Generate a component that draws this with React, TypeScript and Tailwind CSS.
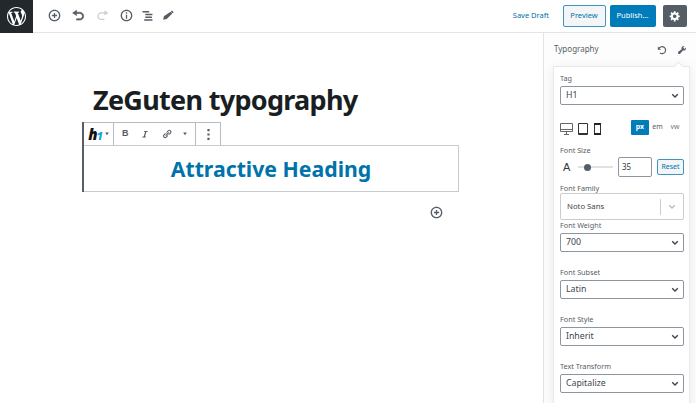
import type { ReactNode } from "react";
import clsx from "clsx";

const icons = {
  wordpress:
    "M20 10c0-5.51-4.49-10-10-10C4.48 0 0 4.49 0 10c0 5.52 4.48 10 10 10 5.51 0 10-4.48 10-10zM7.78 15.37L4.37 6.22c.55-.02 1.17-.08 1.17-.08.5-.06.44-1.13-.06-1.11 0 0-1.45.11-2.37.11-.18 0-.37 0-.58-.01C4.12 2.69 6.87 1.11 10 1.11c2.33 0 4.45.87 6.05 2.34-.68-.11-1.65.39-1.65 1.58 0 .74.45 1.36.9 2.1.35.61.55 1.36.55 2.46 0 1.49-1.4 5-1.4 5l-3.03-8.37c.54-.02.82-.17.82-.17.5-.05.44-1.25-.06-1.22 0 0-1.44.12-2.38.12-.87 0-2.33-.12-2.33-.12-.5-.03-.56 1.2-.06 1.22l.92.08 1.26 3.41zM17.41 10c.24-.64.74-1.87.43-4.25.7 1.29 1.05 2.71 1.05 4.25 0 3.29-1.73 6.24-4.4 7.78.97-2.59 1.94-5.2 2.92-7.78zM6.1 18.09C3.12 16.65 1.11 13.53 1.11 10c0-1.3.23-2.48.72-3.59C3.25 10.3 4.67 14.2 6.1 18.09zm4.03-6.63l2.58 6.98c-.86.29-1.76.45-2.71.45-.79 0-1.57-.11-2.29-.33.81-2.38 1.62-4.74 2.42-7.1z",
  insert:
    "M10 1c-5 0-9 4-9 9s4 9 9 9 9-4 9-9-4-9-9-9zm0 16c-3.9 0-7-3.1-7-7s3.1-7 7-7 7 3.1 7 7-3.1 7-7 7zm1-11H9v3H6v2h3v3h2v-3h3V9h-3V6z",
  undo: "M12 5H7V2L1 6l6 4V7h5c2.2 0 4 1.8 4 4s-1.8 4-4 4H7v2h5c3.3 0 6-2.7 6-6s-2.7-6-6-6z",
  redo: "M8 5h5V2l6 4-6 4V7H8c-2.2 0-4 1.8-4 4s1.8 4 4 4h5v2H8c-3.3 0-6-2.7-6-6s2.7-6 6-6z",
  info: "M10 1c-5 0-9 4-9 9s4 9 9 9 9-4 9-9-4-9-9-9zm0 16c-3.9 0-7-3.1-7-7s3.1-7 7-7 7 3.1 7 7-3.1 7-7 7zM9 9h2v6H9V9zm0-4h2v2.2H9V5z",
  outline: "M1 2h12v2.4H1V2zm5 5h13v2.4H6V7zm0 5h12v2.4H6V12zm-2 5h15v2.4H4V17z",
  edit: "M13.2 4.1l2.7 2.7-8.6 8.7-5.5 1.2 1.1-5.6zM14 3.300c.9-.9 1.700-.8 2.300-.2l1 1c.6.6.6 1.400-.2 2.100l-.4.5-3.100-3z",
  gear: "M18 12h-2.18c-.17.7-.44 1.35-.81 1.93l1.54 1.54-2.1 2.1-1.54-1.54c-.58.36-1.23.63-1.91.79V19H8v-2.18c-.68-.16-1.33-.43-1.91-.79l-1.54 1.54-2.12-2.12 1.54-1.54c-.36-.58-.63-1.23-.79-1.91H1V9.03h2.17c.16-.7.44-1.35.8-1.94L2.43 5.55l2.1-2.1 1.54 1.54c.58-.37 1.24-.64 1.93-.81V2h3v2.18c.68.16 1.33.43 1.91.79l1.54-1.54 2.12 2.12-1.54 1.54c.36.59.64 1.24.8 1.94H18V12zm-8.5 1.5c1.66 0 3-1.34 3-3s-1.34-3-3-3-3 1.34-3 3 1.34 3 3 3z",
  wrench:
    "M16.68 9.77c-1.34 1.34-3.3 1.67-4.95.99l-5.41 6.52c-.99.99-2.59.99-3.58 0s-.99-2.59 0-3.57l6.52-5.42c-.68-1.65-.35-3.61.99-4.95 1.28-1.28 3.12-1.62 4.72-1.06l-2.89 2.89 2.82 2.82 2.86-2.87c.53 1.58.18 3.39-1.08 4.65z",
  link: "M17.74 2.76c1.68 1.69 1.68 4.41 0 6.1l-1.53 1.52c-1.12 1.12-2.7 1.47-4.14 1.09l2.62-2.61.76-.77.76-.76c.84-.84.84-2.2 0-3.04-.84-.85-2.2-.85-3.04 0l-.77.76-3.38 3.38c-.37-1.44-.02-3.02 1.1-4.14l1.52-1.53c1.69-1.68 4.42-1.68 6.1 0zM8.59 13.43l5.34-5.34c.42-.42.42-1.1 0-1.52-.44-.43-1.13-.39-1.53 0l-5.33 5.34c-.42.42-.42 1.1 0 1.52.44.43 1.13.39 1.52 0zm-.76 2.29l4.14-4.15c.38 1.44.03 3.02-1.09 4.14l-1.52 1.53c-1.69 1.68-4.41 1.68-6.1 0-1.68-1.68-1.68-4.42 0-6.1l1.53-1.52c1.12-1.12 2.7-1.47 4.14-1.1l-4.14 4.15c-.85.84-.85 2.2 0 3.05.84.84 2.2.84 3.04 0z",
  italic: "M14.78 6h-2.13l-2.8 9h2.12l-.62 2H4.6l.62-2h2.14l2.8-9H8.03l.62-2h6.75z",
  caret: "M1 3l9 13 9-13z",
  more: "M8 0h4v4H8V0zm0 8h4v4H8V8zm0 8h4v4H8v-4z",
};

function Icon({ name, className }: { name: keyof typeof icons; className?: string }) {
  return (
    <svg viewBox="0 0 20 20" fill="currentColor" className={clsx("shrink-0", className)}>
      <path d={icons[name]} />
    </svg>
  );
}

function Chevron({ className }: { className?: string }) {
  return (
    <svg viewBox="0 0 8 6" fill="none" stroke="currentColor" strokeWidth="1.4" className={clsx("h-1.5 w-2 shrink-0", className)}>
      <path d="M1.2 1.3l2.8 2.8 2.8-2.8" />
    </svg>
  );
}

function Label({ children }: { children: ReactNode }) {
  return <p className="h-3 text-[7.25px] leading-3 text-[#555d66]">{children}</p>;
}

function SelectField({ label, value }: { label: string; value: string }) {
  return (
    <div>
      <Label>{label}</Label>
      <div className="mt-0.5 flex h-[19px] items-center justify-between rounded-[2px] border border-[#8d96a0] bg-white pr-1 pl-[5px] text-[8.75px] text-[#40464d]">
        {value}
        <Chevron className="text-[#444]" />
      </div>
    </div>
  );
}

function TopBar() {
  return (
    <header className="flex h-[33px] shrink-0 border-b border-[#e2e4e7]">
      <div className="-mb-px flex w-[33px] items-center justify-center bg-[#23282d] text-white">
        <Icon name="wordpress" className="size-[19px]" />
      </div>
      <div className="ml-[15px] flex flex-1 items-center gap-[11px] pb-px text-[#555d66]">
        <Icon name="insert" className="size-[13px]" />
        <Icon name="undo" className="size-[13px] stroke-current" />
        <Icon name="redo" className="size-[13px] text-[#ccced1]" />
        <Icon name="info" className="size-[13px]" />
        <Icon name="outline" className="-mx-0.5 size-[11px]" />
        <Icon name="edit" className="size-[13px]" />
      </div>
      <div className="flex items-center pr-[9px] pb-px text-[7.5px]">
        <span className="mr-[14px] text-[#0073aa]">Save Draft</span>
        <span className="mr-1 flex h-[22px] w-[43px] items-center justify-center rounded-[2px] border border-[#3d96c0] bg-[#f3f5f6] pr-px text-[#0073aa]">
          Preview
        </span>
        <span className="mr-[7px] flex h-[22px] w-[46px] items-center justify-center rounded-[2px] bg-[#007cba] pr-px text-white">
          Publish...
        </span>
        <span className="flex h-[22px] w-6 items-center justify-center rounded-[2px] bg-[#555d66] text-white">
          <Icon name="gear" className="size-3" />
        </span>
      </div>
    </header>
  );
}

function BlockToolbar() {
  return (
    <div className="flex h-6 w-[137px] border border-l-0 border-[#b5bcc2] text-[#555d66]">
      <div className="flex w-[30px] items-center justify-center gap-[3px] border-r border-[#b5bcc2]">
        <span className="font-['Open_Sans',sans-serif] text-[15px] leading-none font-extrabold tracking-[-1px] text-[#111] italic">
          h<span className="text-[11px] text-[#1aa3d9]">1</span>
        </span>
        <Icon name="caret" className="size-1" />
      </div>
      <div className="flex flex-1 items-center justify-between border-r border-[#b5bcc2] pr-2 pl-[8px]">
        <span className="font-['Liberation_Sans',sans-serif] text-[9px] font-bold">B</span>
        <Icon name="italic" className="size-[10px]" />
        <Icon name="link" className="size-[10px]" />
        <Icon name="caret" className="size-1" />
      </div>
      <div className="flex w-6 items-center justify-center">
        <Icon name="more" className="size-[11px]" />
      </div>
    </div>
  );
}

function Editor() {
  return (
    <main className="flex-1 pt-[48px] pl-[82px]">
      <h1 className="ml-[11px] h-[41px] text-[27px] leading-[38px] font-bold tracking-[-0.7px] whitespace-nowrap text-[#191e23]">
        ZeGuten typography
      </h1>
      <div className="w-[377px] border-l-2 border-[#555d66]">
        <BlockToolbar />
        <div className="-mt-px flex h-[47px] items-center justify-center border border-l-0 border-[#c5cccf] text-[21.25px] font-bold text-[#0073aa]">
          Attractive Heading
        </div>
      </div>
      <div className="mt-[14px] flex w-[377px] justify-end pr-4 text-[#555d66]">
        <Icon name="insert" className="size-[13px]" />
      </div>
    </main>
  );
}

function Devices() {
  return (
    <svg viewBox="0 0 44 14" fill="none" className="mt-0.5 h-[14px] w-11">
      <path d="M.5 1.5h12v8H.5zM1 7.500h11M4 12.500h5M6.500 9.500v3" stroke="#666" />
      <path d="M18.500 1.500h9v11h-9zM18 11.500h10M34.500 1.500h6v11h-6z" stroke="#333" />
      <path d="M34 2h7M34 12h7" stroke="#222" strokeWidth="2" />
    </svg>
  );
}

function Sidebar() {
  return (
    <aside className="w-[153px] border-l border-[#e2e4e7] bg-[#fdfdfd] pr-[6px] pl-[9px]">
      <div className="flex h-[33px] items-center pl-px text-[8px] text-[#555d66]">
        <span className="flex-1 pb-px">Typography</span>
        <svg viewBox="0 0 10 10" fill="none" className="mt-px mr-2.5 size-[10px]">
          <path d="M2.2 3.2A3.5 3.5 0 1 1 3 8" stroke="#555d66" strokeWidth="1.2" />
          <path d="M.8 1.5v3.2H4z" fill="#555d66" />
        </svg>
        <Icon name="wrench" className="mt-px mr-[3px] size-[10px]" />
      </div>
      <div className="relative h-[345px] border border-[#e7e9eb] bg-white pt-[5px] pr-[5px] pl-[6px] shadow-[0_2px_12px_rgba(0,0,0,0.08)]">
        <span className="absolute -top-[4px] right-[7px] size-[7px] rotate-45 border-t border-l border-[#e7e9eb] bg-white" />
        <SelectField label="Tag" value="H1" />
        <div className="mt-[15px] flex h-[15px] items-center justify-between">
          <Devices />
          <div className="flex items-center pb-px text-[7px] text-[#555d66]">
            <span className="flex h-[15px] w-[18px] items-center justify-center rounded-[1px] bg-[#007cba] font-bold text-white">
              px
            </span>
            <span className="w-[17px] text-center">em</span>
            <span className="w-[18px] text-center text-[#777]">vw</span>
          </div>
        </div>
        <div className="mt-[9px]">
          <Label>Font Size</Label>
          <div className="flex h-[21px] items-center pt-px">
            <span className="ml-[3px] w-[15px] font-['Liberation_Sans',sans-serif] text-[11px] text-[#32373c]">A</span>
            <div className="flex h-0.5 w-[35px] items-center bg-[#dfe1e3] pl-[6px]">
              <span className="size-[7px] rounded-full bg-[#555d66]" />
            </div>
            <div className="ml-[5px] flex h-5 w-[34px] items-center rounded-[2px] border border-[#8d96a0] pl-[3px] text-[8px] text-[#32373c]">
              35
            </div>
            <div className="ml-[5px] flex h-4 w-[27px] items-center justify-center rounded-[2px] border border-[#3d96c0] bg-[#f3f5f6] text-[7px] text-[#0073aa]">
              Reset
            </div>
          </div>
        </div>
        <div className="mt-[5px]">
          <Label>Font Family</Label>
          <div className="-mt-px flex h-[27px] items-center rounded-[2px] border border-[#ccc] pt-px pr-[7px] pl-[6px] text-[7.75px] text-[#444]">
            <span className="flex-1">Noto Sans</span>
            <span className="mr-[7px] h-4 w-px bg-[#ccc]" />
            <Chevron className="text-[#bbb]" />
          </div>
        </div>
        <div className="-mt-px flex flex-col gap-[14px]">
          <SelectField label="Font Weight" value="700" />
          <SelectField label="Font Subset" value="Latin" />
          <SelectField label="Font Style" value="Inherit" />
          <SelectField label="Text Transform" value="Capitalize" />
        </div>
      </div>
    </aside>
  );
}

export default function App() {
  return (
    <div className="flex h-[403px] w-[696px] flex-col overflow-hidden bg-white font-['Noto_Sans',sans-serif]">
      <TopBar />
      <div className="flex flex-1">
        <Editor />
        <Sidebar />
      </div>
    </div>
  );
}
